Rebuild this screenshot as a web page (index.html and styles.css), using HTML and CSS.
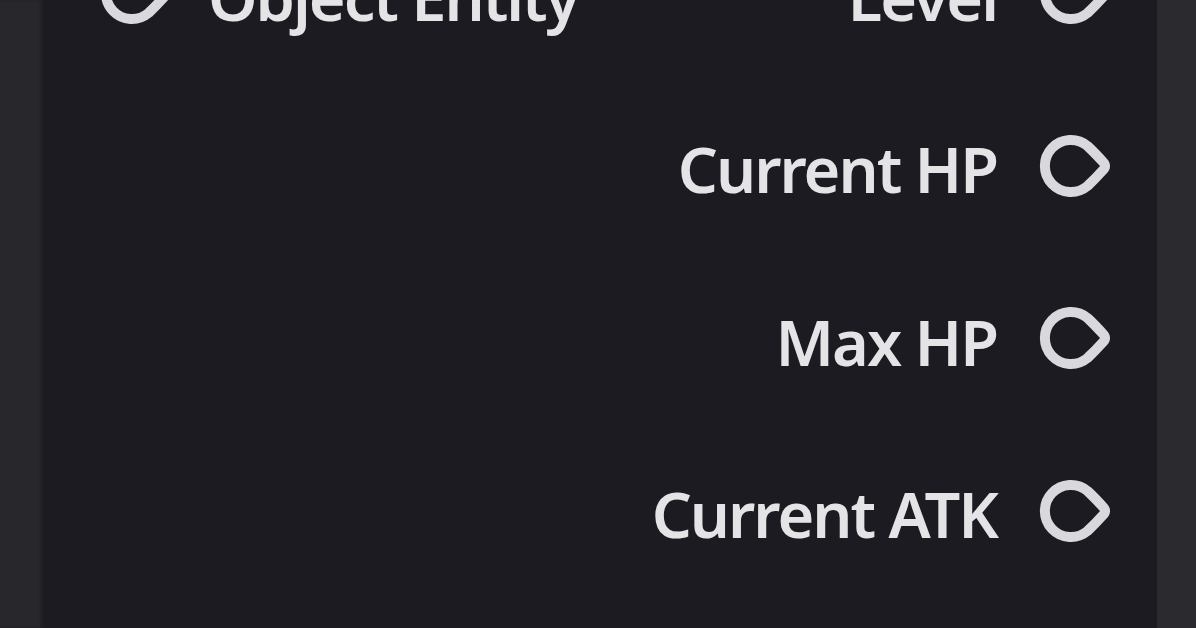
FILE: index.html
```html
<!DOCTYPE html>
<html>
<head>
<meta charset="utf-8">
<link rel="stylesheet" href="styles.css">
</head>
<body>
<div class="app">
  <div class="strip strip-left"></div>
  <div class="panel">
    <div class="rows">
      <div class="row">
        <div class="port port-in">
          <svg class="socket" viewBox="0 0 84 66"><path d="M52.5 13 A26 26 0 1 0 52.5 53 Q60 46 69 36 Q71 33 69 30 Q60 20 52.5 13 Z"/></svg>
          <span class="label">Object Entity</span>
        </div>
        <div class="port port-out">
          <span class="label">Level</span>
          <svg class="socket" viewBox="0 0 84 66"><path d="M52.5 13 A26 26 0 1 0 52.5 53 Q60 46 69 36 Q71 33 69 30 Q60 20 52.5 13 Z"/></svg>
        </div>
      </div>
      <div class="row">
        <div class="port port-out">
          <span class="label">Current HP</span>
          <svg class="socket" viewBox="0 0 84 66"><path d="M52.5 13 A26 26 0 1 0 52.5 53 Q60 46 69 36 Q71 33 69 30 Q60 20 52.5 13 Z"/></svg>
        </div>
      </div>
      <div class="row">
        <div class="port port-out">
          <span class="label">Max HP</span>
          <svg class="socket" viewBox="0 0 84 66"><path d="M52.5 13 A26 26 0 1 0 52.5 53 Q60 46 69 36 Q71 33 69 30 Q60 20 52.5 13 Z"/></svg>
        </div>
      </div>
      <div class="row">
        <div class="port port-out">
          <span class="label">Current ATK</span>
          <svg class="socket" viewBox="0 0 84 66"><path d="M52.5 13 A26 26 0 1 0 52.5 53 Q60 46 69 36 Q71 33 69 30 Q60 20 52.5 13 Z"/></svg>
        </div>
      </div>
    </div>
  </div>
  <div class="strip strip-right"></div>
</div>
</body>
</html>
```
FILE: styles.css
```css
html, body {
  margin: 0;
  padding: 0;
  width: 1196px;
  height: 628px;
  overflow: hidden;
  background: #1c1b21;
}
.app {
  display: flex;
  width: 1196px;
  height: 628px;
}
.strip {
  flex: none;
  height: 100%;
}
.strip-left {
  width: 44px;
  background: #28272c;
  box-shadow: inset -3px 0 3px rgba(0,0,0,0.25);
}
.strip-right {
  width: 39px;
  background: #2b2a2f;
}
.panel {
  flex: 1;
  background: #1c1b21;
  overflow: hidden;
}
.rows {
  margin-top: -93px;
  padding: 0 38px 0 52px;
}
.row {
  height: 172.5px;
  display: flex;
  align-items: center;
  justify-content: flex-end;
}
.row:first-child {
  justify-content: space-between;
}
.port {
  display: flex;
  align-items: center;
}
.port-out {
  gap: 38px;
}
.port-in {
  gap: 28px;
}
.label {
  font-family: "Noto Sans", "Open Sans", sans-serif;
  font-size: 63px;
  font-weight: 600;
  line-height: 1;
  color: #e4e3e6;
  letter-spacing: -2px;
  position: relative;
  top: 3px;
}
.socket {
  width: 84px;
  height: 66px;
  flex: none;
  display: block;
}
.socket path {
  fill: none;
  stroke: #d9d8dc;
  stroke-width: 10;
  stroke-linejoin: round;
}
```
